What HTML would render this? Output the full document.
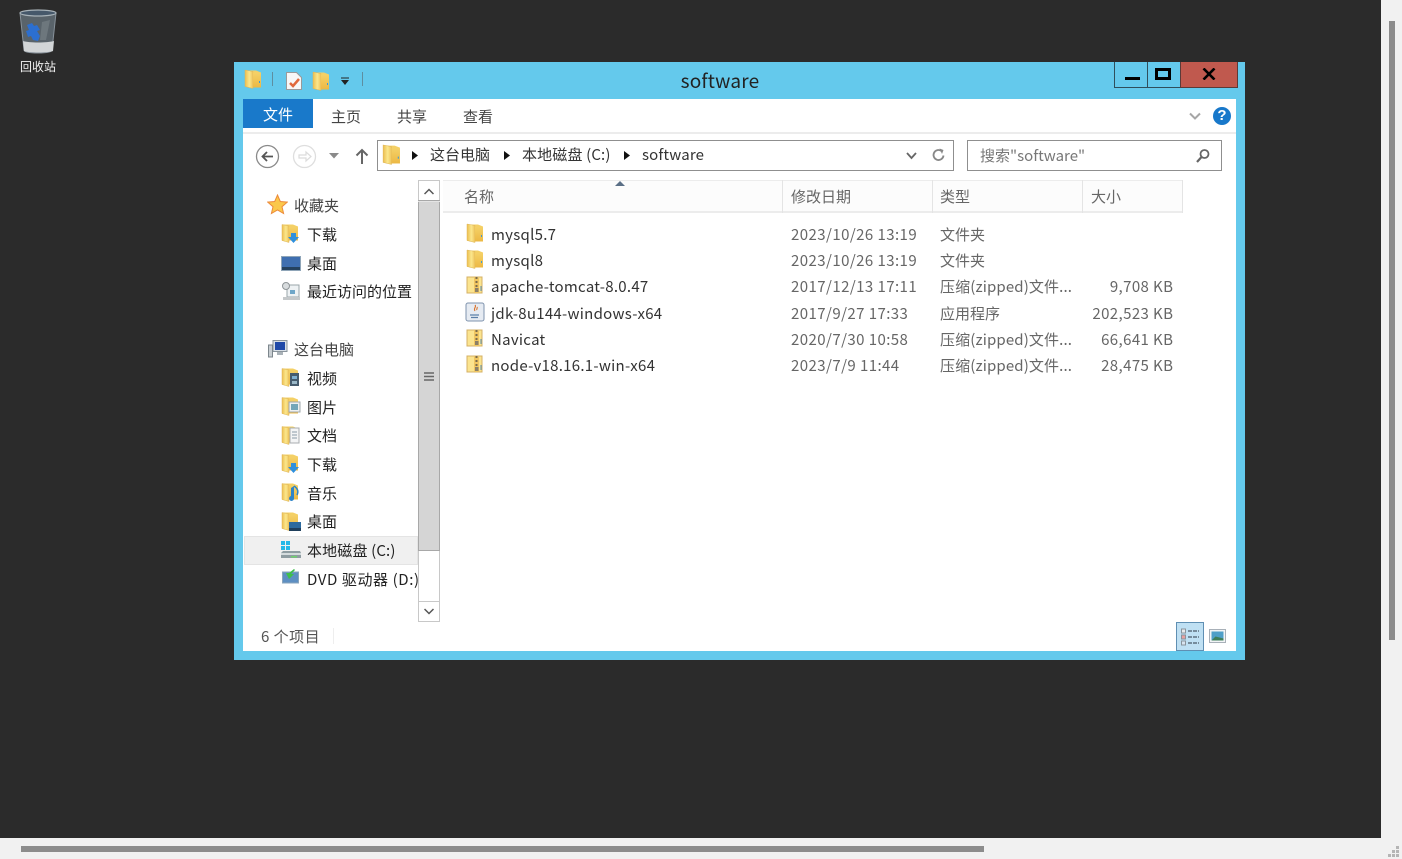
<!DOCTYPE html>
<html><head><meta charset="utf-8">
<style>
html,body{margin:0;padding:0;width:1402px;height:859px;overflow:hidden;background:#2b2b2b}
body{position:relative;font-family:"Noto Sans CJK SC","Liberation Sans",sans-serif;font-size:15px;color:#222}
.a,.t,svg.i{position:absolute}
.t{white-space:nowrap;line-height:20px;filter:blur(.35px)}
.g{color:#666}
.n{color:#333}
.l{letter-spacing:.27px}
.d{letter-spacing:.43px}
.c{letter-spacing:.13px}
.r{text-align:right;width:120px;left:1053.4px;letter-spacing:.4px}
</style></head>
<body>
<svg width="0" height="0" style="position:absolute">
<defs>
<linearGradient id="y" x1="0" x2="1" y1="0" y2="0"><stop offset="0" stop-color="#ecbe50"/><stop offset=".55" stop-color="#fbe78c"/><stop offset="1" stop-color="#efc35a"/></linearGradient>
<linearGradient id="y2" x1="0" x2="0" y1="0" y2="1"><stop offset="0" stop-color="#f5d268"/><stop offset="1" stop-color="#ecb844"/></linearGradient>
<symbol id="f" viewBox="0 0 18 20"><path d="M1 1.500h11l5 2v15H5l-4-1z" fill="url(#y2)"/><path d="M1 1l8 1.500v17L1 17.500z" fill="url(#y)" stroke="#deb558" stroke-width=".5"/><path d="M9 3.500h8v15H9z" fill="url(#y2)"/><path d="M15.500 12v2" stroke="#3b9bd8" stroke-width="1"/></symbol>
<symbol id="z" viewBox="0 0 18 20"><path d="M1 2h15v16H1z" fill="#fbe48f" stroke="#d4b064" stroke-width="1"/><path d="M8 2l5 1v15H8z" fill="#f0c662"/><path d="M9.500 2h2v2h-2zM9.500 6h2v2h-2zM9.500 10h2v2h-2z" fill="#7a6b4a"/><rect x="9" y="13" width="3.500" height="4" fill="#8b8068"/><path d="M15 11v5" stroke="#5a8fb5"/></symbol>
<symbol id="fb" viewBox="0 0 20 20"><path d="M1 1h11l5 2v14H4l-3-1z" fill="url(#y2)"/><path d="M1 1l7 1.500v16.500l-7-2z" fill="url(#y)" stroke="#deb558" stroke-width=".5"/><path d="M8 3h9v14H8z" fill="url(#y2)"/></symbol>
</defs>
</svg>

<!-- desktop -->
<svg class="i" style="left:18px;top:8px" width="40" height="46" viewBox="0 0 40 46">
<path d="M2 5l4 37c0 2 6 3 14 3s14-1 14-3l4-37z" fill="#59636a" stroke="#87919a"/>
<path d="M24 14l8-2-4 20h-6z" fill="#6d777d"/>
<ellipse cx="20" cy="5" rx="18" ry="3" fill="#46586a" stroke="#a8b2b8" stroke-width="1.200"/>
<path d="M5 33c6 2 24 2 31 0l-1 10c-4 2-25 2-29 0z" fill="#d2d5d7"/>
<path d="M9 17l5-2 2 3 3-1 3 5-3 1 3 5-2 5-5-1-2-4-3 1-2-6 3-1z" fill="#2c6fd0"/>
</svg>
<div class="t" style="left:20px;top:58px;font-size:12px;color:#f2f2f2;line-height:18px">回收站</div>

<!-- window -->
<div class="a" style="left:234px;top:62px;width:1011px;height:598px;background:#64c9ec"></div>
<div class="a" style="left:243px;top:99px;width:993px;height:552px;background:#fff"></div>

<!-- title bar icons -->
<svg class="i" style="left:244px;top:69px" width="18" height="20"><use href="#f"/></svg>
<div class="a" style="left:272px;top:72px;width:1px;height:14px;background:#5e8ea0"></div>
<svg class="i" style="left:285px;top:71px" width="18" height="20" viewBox="0 0 18 20"><path d="M1.500 1.500h10l5 5v12h-15z" fill="#f7f7f7" stroke="#9a9a9a"/><path d="M5 12l3 3 6-7" fill="none" stroke="#e0683c" stroke-width="2.500"/></svg>
<svg class="i" style="left:312px;top:71px" width="18" height="20"><use href="#f"/></svg>
<svg class="i" style="left:340px;top:77px" width="10" height="10" viewBox="0 0 10 10"><path d="M1 1h8" stroke="#222" stroke-width="1"/><path d="M1 3h8L5 8z" fill="#222"/></svg>
<div class="a" style="left:362px;top:72px;width:1px;height:14px;background:#5e8ea0"></div>
<div class="t" style="left:620px;width:200px;text-align:center;top:70px;font-size:19px;line-height:22px;color:#222;letter-spacing:.2px">software</div>

<!-- window buttons -->
<div class="a" style="left:1114px;top:62px;width:34px;height:26px;box-sizing:border-box;border:1px solid #2f4f5c;border-top:0"></div>
<div class="a" style="left:1148px;top:62px;width:32px;height:26px;box-sizing:border-box;border-bottom:1px solid #2f4f5c"></div>
<div class="a" style="left:1180px;top:62px;width:58px;height:26px;box-sizing:border-box;background:#c0594e;border:1px solid #5c3a38;border-top:0"></div>
<div class="a" style="left:1125px;top:77px;width:15px;height:3px;background:#000"></div>
<div class="a" style="left:1155px;top:68px;width:16px;height:12px;box-sizing:border-box;border:3px solid #000;border-top-width:3px"></div>
<svg class="i" style="left:1202px;top:68px" width="14" height="12" viewBox="0 0 14 12"><path d="M1.500 0.500l11 11M12.500 0.500l-11 11" stroke="#000" stroke-width="2.600"/></svg>

<!-- ribbon -->
<div class="a" style="left:243px;top:99px;width:70px;height:29px;background:#1979ca"></div>
<div class="t" style="left:263px;top:105px;color:#fff;font-size:15px">文件</div>
<div class="t" style="left:331px;top:107px;color:#444;font-size:15px">主页</div>
<div class="t" style="left:397px;top:107px;color:#444;font-size:15px">共享</div>
<div class="t" style="left:463px;top:107px;color:#444;font-size:15px">查看</div>
<div class="a" style="left:243px;top:132px;width:993px;height:2px;background:#ececec"></div>
<svg class="i" style="left:1189px;top:112px" width="12" height="9" viewBox="0 0 12 9"><path d="M1 1.500l5 5 5-5" fill="none" stroke="#a6a6a6" stroke-width="2"/></svg>
<div class="a" style="left:1213px;top:107px;width:18px;height:18px;border-radius:9px;background:#1878ca;color:#fff;font:bold 15px/18px 'Liberation Sans',sans-serif;text-align:center">?</div>

<!-- nav -->
<svg class="i" style="left:255px;top:144px" width="25" height="25" viewBox="0 0 25 25"><circle cx="12.500" cy="12.500" r="11" fill="#fff" stroke="#8a8a8a" stroke-width="1.300"/><path d="M18 12.500H8M12 8l-4.500 4.500L12 17" fill="none" stroke="#555" stroke-width="1.800"/></svg>
<svg class="i" style="left:292px;top:144px" width="25" height="25" viewBox="0 0 25 25"><circle cx="12.500" cy="12.500" r="11" fill="#fff" stroke="#dedede" stroke-width="1.300"/><path d="M7 11h7V8l5 4.500-5 4.500v-3H7z" fill="none" stroke="#dcdcdc" stroke-width="1.200"/></svg>
<svg class="i" style="left:329px;top:153px" width="10" height="6"><path d="M0 0h10L5 5.500z" fill="#8a8a8a"/></svg>
<svg class="i" style="left:355px;top:148px" width="14" height="17" viewBox="0 0 14 17"><path d="M7 16V2M1.500 7.500L7 2l5.500 5.500" fill="none" stroke="#666" stroke-width="2"/></svg>

<!-- address -->
<div class="a" style="left:377px;top:140px;width:577px;height:31px;box-sizing:border-box;border:1px solid #8f8f8f;background:#fff"></div>
<svg class="i" style="left:382px;top:144px" width="19" height="21"><use href="#f"/></svg>
<svg class="i" style="left:412px;top:151px" width="6" height="9"><path d="M0 0l6 4.500L0 9z" fill="#111"/></svg>
<div class="t n" style="left:430px;top:145px">这台电脑</div>
<svg class="i" style="left:504px;top:151px" width="6" height="9"><path d="M0 0l6 4.500L0 9z" fill="#111"/></svg>
<div class="t n" style="left:522px;top:145px;letter-spacing:.15px">本地磁盘 (C:)</div>
<svg class="i" style="left:624px;top:151px" width="6" height="9"><path d="M0 0l6 4.500L0 9z" fill="#111"/></svg>
<div class="t n" style="left:642px;top:145px;letter-spacing:.15px">software</div>
<svg class="i" style="left:906px;top:152px" width="11" height="8" viewBox="0 0 11 8"><path d="M1 1l4.500 5L10 1" fill="none" stroke="#666" stroke-width="1.800"/></svg>
<svg class="i" style="left:931px;top:147px" width="15" height="16" viewBox="0 0 15 16"><path d="M12.500 8.500a5 5 0 1 1-2-4.500" fill="none" stroke="#888" stroke-width="1.800"/><path d="M8.500 1.500l4 1.500-1.500 4z" fill="#888"/></svg>

<!-- search -->
<div class="a" style="left:967px;top:140px;width:255px;height:31px;box-sizing:border-box;border:1px solid #8f8f8f;background:#fff"></div>
<div class="t" style="left:980px;top:146px;color:#777">搜索"software"</div>
<svg class="i" style="left:1195px;top:148px" width="16" height="16" viewBox="0 0 16 16"><circle cx="9.500" cy="6" r="4" fill="none" stroke="#666" stroke-width="1.800"/><path d="M6.500 9l-4.500 5" stroke="#666" stroke-width="2.200"/></svg>

<!-- tree -->
<svg class="i" style="left:267px;top:194px" width="21" height="21" viewBox="0 0 21 21"><path d="M10.500 1l2.800 6.500 7 .6-5.300 4.600 1.600 6.800-6.100-3.600-6.100 3.600 1.600-6.800L.7 8.100l7-.6z" fill="#fbc84a" stroke="#ec8a3a" stroke-width="1"/></svg>
<div class="t" style="left:294px;top:196px;color:#444">收藏夹</div>
<svg class="i" style="left:281px;top:223px" width="20" height="21"><use href="#fb"/><path d="M10 10h5v4h3l-5.500 6L7 14h3z" fill="#2f8fdc"/></svg>
<div class="t" style="left:307px;top:225px">下载</div>
<svg class="i" style="left:281px;top:256px" width="20" height="16" viewBox="0 0 20 16"><rect x=".5" y=".5" width="19" height="14" fill="#3f6fb0" stroke="#8fa5b8"/><rect x="1" y="11" width="18" height="3" fill="#25425f"/></svg>
<div class="t" style="left:307px;top:254px">桌面</div>
<svg class="i" style="left:281px;top:282px" width="20" height="19" viewBox="0 0 20 19"><rect x="6" y="3" width="12" height="12" fill="#eef2f4" stroke="#9aa5aa"/><circle cx="5" cy="4" r="3.500" fill="#d8dcde" stroke="#8f9598"/><rect x="9" y="8" width="5" height="4" fill="#6fa6c8"/><rect x="2" y="15" width="17" height="3" fill="#c4c8ca"/></svg>
<div class="t" style="left:307px;top:282px">最近访问的位置</div>

<svg class="i" style="left:268px;top:340px" width="20" height="18" viewBox="0 0 20 18"><rect x="5" y="0.500" width="14" height="11" fill="#d8dfe6" stroke="#8a949c"/><rect x="7" y="2" width="10" height="8" fill="#1f49a8"/><rect x="9" y="12" width="6" height="3" fill="#aab2b8"/><rect x="0.500" y="5" width="4" height="12" fill="#c8ced2" stroke="#7c868c"/></svg>
<div class="t" style="left:294px;top:340px;color:#444">这台电脑</div>
<svg class="i" style="left:281px;top:367px" width="20" height="21"><use href="#fb"/><rect x="9" y="6" width="9" height="13" fill="#465c6e"/><rect x="11" y="9" width="5" height="3" fill="#7fb0d0"/><rect x="11" y="14" width="5" height="3" fill="#9ab8c8"/></svg>
<div class="t" style="left:307px;top:369px">视频</div>
<svg class="i" style="left:281px;top:396px" width="20" height="21"><use href="#fb"/><rect x="8" y="6" width="11" height="10" fill="#eef0f0" stroke="#a0a8ac"/><rect x="10" y="8" width="7" height="6" fill="#74a6b8"/></svg>
<div class="t" style="left:307px;top:398px">图片</div>
<svg class="i" style="left:281px;top:425px" width="20" height="21"><use href="#fb"/><rect x="9" y="3" width="9" height="15" fill="#f3f4f5" stroke="#a8adb0"/><path d="M11 7h5M11 10h5M11 13h5" stroke="#8a9aa8"/></svg>
<div class="t" style="left:307px;top:426px">文档</div>
<svg class="i" style="left:281px;top:453px" width="20" height="21"><use href="#fb"/><path d="M10 10h5v4h3l-5.500 6L7 14h3z" fill="#2f8fdc"/></svg>
<div class="t" style="left:307px;top:455px">下载</div>
<svg class="i" style="left:281px;top:482px" width="20" height="21"><use href="#fb"/><path d="M13 4v12a2.500 2.500 0 1 1-3-2V6z" fill="#2f84c8"/><path d="M13 4c3 2 5 5 3 9" fill="none" stroke="#2f84c8" stroke-width="1.500"/></svg>
<div class="t" style="left:307px;top:484px">音乐</div>
<svg class="i" style="left:281px;top:511px" width="20" height="21"><use href="#fb"/><rect x="8" y="11" width="12" height="9" fill="#2d6a9e"/><rect x="8" y="17" width="12" height="3" fill="#1f3f5c"/></svg>
<div class="t" style="left:307px;top:512px">桌面</div>
<div class="a" style="left:244px;top:536px;width:174px;height:29px;box-sizing:border-box;background:#f0f0f0;border:1px solid #e4e4e4"></div>
<svg class="i" style="left:280px;top:540px" width="22" height="20" viewBox="0 0 22 20"><path d="M1 1h4v4H1zM6 1h4v4H6zM1 6h4v4H1zM6 6h4v4H6z" fill="#25b8e8"/><path d="M1 13l2-2h17l1 2v5H1z" fill="#8f9da2"/><rect x="1" y="13" width="20" height="2" fill="#d5dcde"/><rect x="11" y="16" width="6" height="1.500" fill="#6fd06f"/></svg>
<div class="t" style="left:307px;top:541px;letter-spacing:.15px">本地磁盘 (C:)</div>
<svg class="i" style="left:282px;top:568px" width="18" height="16" viewBox="0 0 18 16"><rect x="0.500" y="4" width="16" height="11" fill="#5d8fc2" stroke="#8aa5bc"/><path d="M12 1L7 5H4l3 6 5-5-3 0 4-4z" fill="#3fbf4a"/></svg>
<div class="t" style="left:307px;top:570px;width:112px;overflow:hidden;letter-spacing:.6px">DVD 驱动器 (D:)</div>

<!-- tree scrollbar -->
<div class="a" style="left:418px;top:180px;width:22px;height:442px;box-sizing:border-box;border:1px solid #c8c8c8;background:#fff"></div>
<div class="a" style="left:418px;top:200px;width:22px;height:351px;box-sizing:border-box;border:1px solid #a8a8a8;background:#d5d5d5"></div>
<div class="a" style="left:418px;top:201px;width:22px;height:1px;background:#e4e4e4"></div>
<div class="a" style="left:418px;top:601px;width:22px;height:1px;background:#c8c8c8"></div>
<svg class="i" style="left:424px;top:188px" width="10" height="7" viewBox="0 0 10 7"><path d="M.5 6L5 1.500 9.500 6" fill="none" stroke="#555" stroke-width="1.500"/></svg>
<svg class="i" style="left:424px;top:608px" width="10" height="7" viewBox="0 0 10 7"><path d="M.5 1L5 5.500 9.500 1" fill="none" stroke="#555" stroke-width="1.500"/></svg>
<svg class="i" style="left:424px;top:372px" width="10" height="9"><path d="M0 1h10M0 4.500h10M0 8h10" stroke="#666" stroke-width="1.400"/></svg>

<!-- headers -->
<div class="a" style="left:443px;top:180px;width:740px;height:33px;box-sizing:border-box;background:#fcfcfc;border-top:1px solid #ececec;border-bottom:2px solid #ececec"></div>
<div class="a" style="left:782px;top:180px;width:1px;height:33px;background:#e4e4e4"></div>
<div class="a" style="left:932px;top:180px;width:1px;height:33px;background:#e4e4e4"></div>
<div class="a" style="left:1082px;top:180px;width:1px;height:33px;background:#e4e4e4"></div>
<div class="a" style="left:1182px;top:180px;width:1px;height:33px;background:#e4e4e4"></div>
<svg class="i" style="left:615px;top:180px" width="10" height="6"><path d="M0 6l5-5 5 5z" fill="#5a6f86"/></svg>
<div class="t g" style="left:464px;top:187px">名称</div>
<div class="t g" style="left:791px;top:187px">修改日期</div>
<div class="t g" style="left:940px;top:187px">类型</div>
<div class="t g" style="left:1091px;top:187px">大小</div>

<!-- rows -->
<svg class="i" style="left:466px;top:223px" width="18" height="20"><use href="#f"/></svg>
<div class="t n l" style="left:491px;top:225px">mysql5.7</div>
<div class="t g d" style="left:791px;top:225px">2023/10/26 13:19</div>
<div class="t g" style="left:940px;top:225px">文件夹</div>

<svg class="i" style="left:466px;top:249px" width="18" height="20"><use href="#f"/></svg>
<div class="t n l" style="left:491px;top:251px">mysql8</div>
<div class="t g d" style="left:791px;top:251px">2023/10/26 13:19</div>
<div class="t g" style="left:940px;top:251px">文件夹</div>

<svg class="i" style="left:466px;top:275px" width="18" height="20"><use href="#z"/></svg>
<div class="t n l" style="left:491px;top:277px">apache-tomcat-8.0.47</div>
<div class="t g d" style="left:791px;top:277px">2017/12/13 17:11</div>
<div class="t g c" style="left:940px;top:277px">压缩(zipped)文件...</div>
<div class="t g r" style="top:277px">9,708 KB</div>

<svg class="i" style="left:465px;top:302px" width="20" height="20" viewBox="0 0 20 20"><rect x="1" y="1" width="18" height="18" rx="2" fill="#e6ebf2" stroke="#7f93ad"/><path d="M5 13h9M6 15.500h7" stroke="#5b7fa8" stroke-width="1.200"/><path d="M10 3c2 2-2 3 0 6M12 5c1 1-1 2 0 3" fill="none" stroke="#d9722a" stroke-width="1.100"/></svg>
<div class="t n l" style="left:491px;top:304px">jdk-8u144-windows-x64</div>
<div class="t g d" style="left:791px;top:304px">2017/9/27 17:33</div>
<div class="t g" style="left:940px;top:304px">应用程序</div>
<div class="t g r" style="top:304px">202,523 KB</div>

<svg class="i" style="left:466px;top:328px" width="18" height="20"><use href="#z"/></svg>
<div class="t n l" style="left:491px;top:330px">Navicat</div>
<div class="t g d" style="left:791px;top:330px">2020/7/30 10:58</div>
<div class="t g c" style="left:940px;top:330px">压缩(zipped)文件...</div>
<div class="t g r" style="top:330px">66,641 KB</div>

<svg class="i" style="left:466px;top:354px" width="18" height="20"><use href="#z"/></svg>
<div class="t n l" style="left:491px;top:356px">node-v18.16.1-win-x64</div>
<div class="t g d" style="left:791px;top:356px">2023/7/9 11:44</div>
<div class="t g c" style="left:940px;top:356px">压缩(zipped)文件...</div>
<div class="t g r" style="top:356px">28,475 KB</div>

<!-- status -->
<div class="t" style="left:261px;top:627px;color:#555;letter-spacing:.5px">6 个项目</div>
<div class="a" style="left:333px;top:628px;width:1px;height:16px;background:#eee"></div>
<div class="a" style="left:1176px;top:622px;width:28px;height:29px;box-sizing:border-box;background:#bfe0f3;border:1px solid #5f8fb3"></div>
<svg class="i" style="left:1181px;top:628px" width="19" height="18" viewBox="0 0 19 18"><rect x=".5" y="1" width="4" height="4" fill="#e8eaec" stroke="#8a949c"/><rect x=".5" y="7" width="4" height="4" fill="#e8a0a0" stroke="#8a949c"/><rect x=".5" y="13" width="4" height="4" fill="#d8e4f0" stroke="#8a949c"/><path d="M7 3h11M7 9h11M7 15h11" stroke="#4a5a68" stroke-width="1.200" stroke-dasharray="4 1"/></svg>
<svg class="i" style="left:1209px;top:629px" width="17" height="14" viewBox="0 0 17 14"><rect x=".5" y=".5" width="16" height="13" fill="#f2f4f6" stroke="#a8b0b8"/><rect x="2.500" y="2.500" width="12" height="9" fill="#4f9fc8"/><path d="M2.500 11.500l4-4 8 2v2z" fill="#3f7f5a"/></svg>

<!-- browser scrollbars -->
<div class="a" style="left:1381px;top:0;width:21px;height:859px;background:#f1f1f1"></div>
<div class="a" style="left:0;top:838px;width:1402px;height:21px;background:#f1f1f1"></div>
<div class="a" style="left:1389px;top:21px;width:6px;height:619px;background:#8c8c8c"></div>
<div class="a" style="left:21px;top:846px;width:963px;height:6px;background:#8c8c8c"></div>
<svg class="i" style="left:1388px;top:845px" width="14" height="14"><path d="M8 1h3v3H8zM4 5h3v3H4zM8 5h3v3H8zM0 9h3v3H0zM4 9h3v3H4zM8 9h3v3H8z" fill="#b5b5b5"/></svg>
</body></html>
